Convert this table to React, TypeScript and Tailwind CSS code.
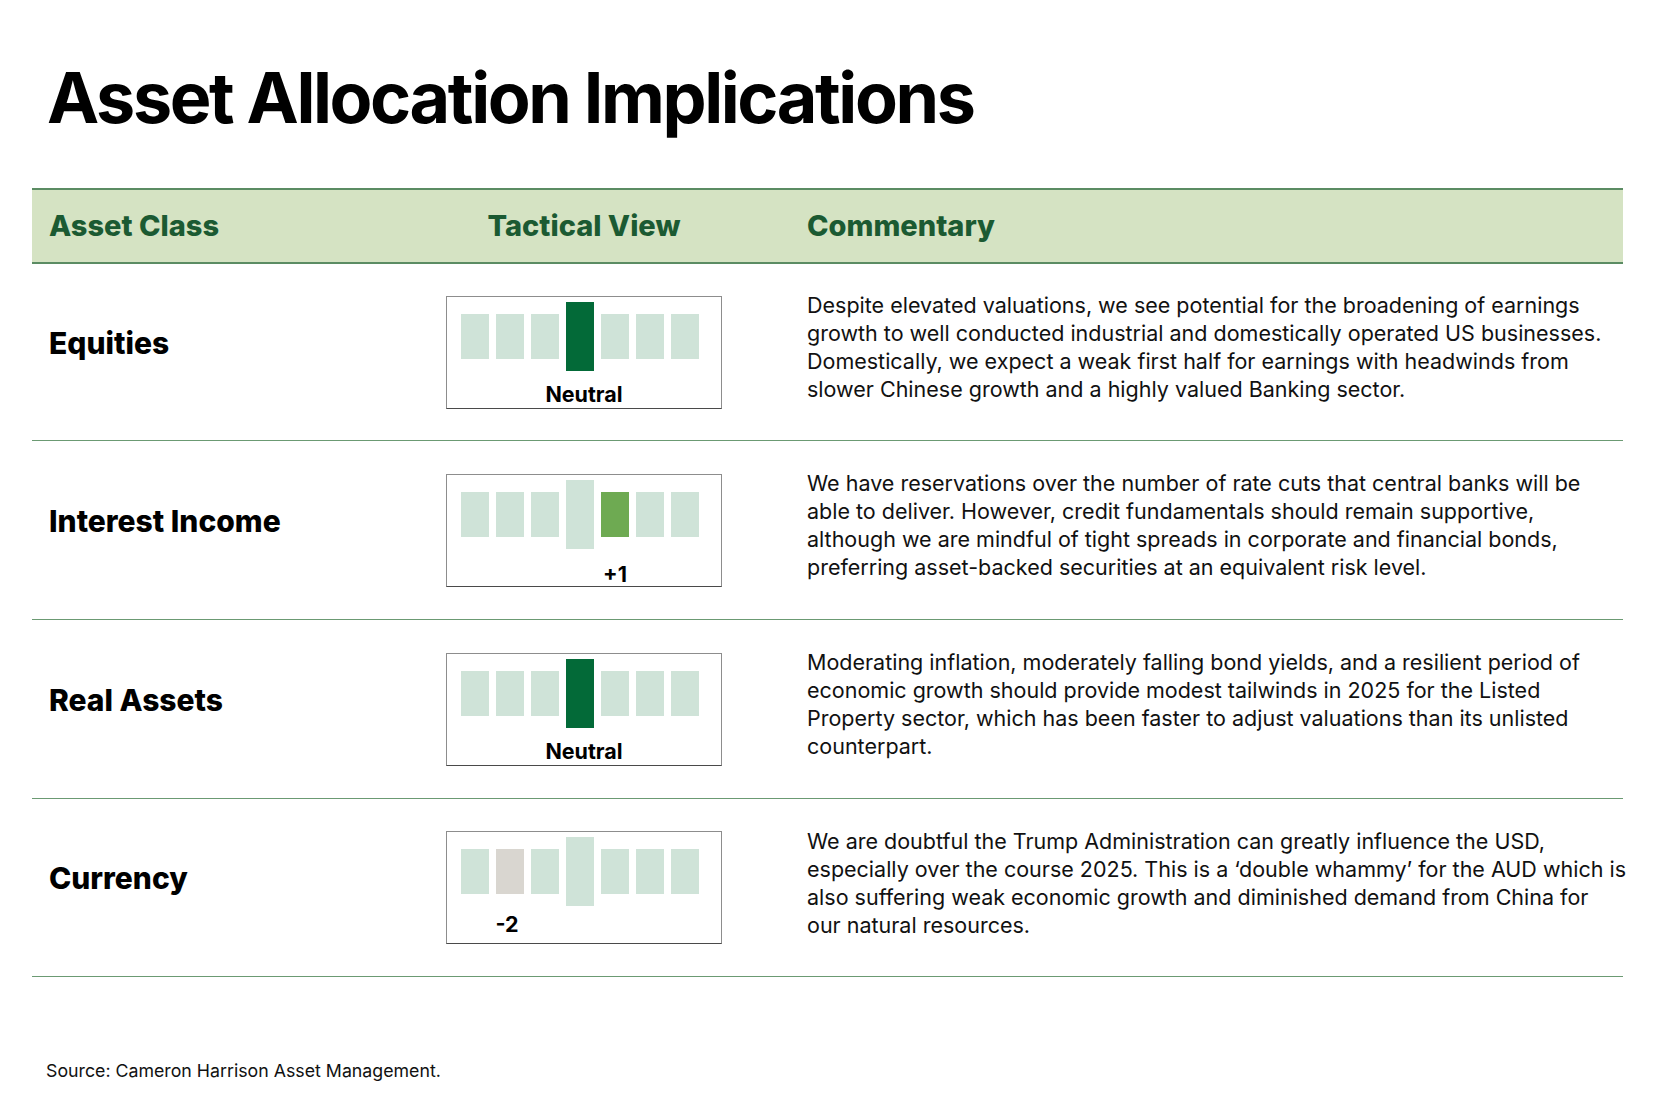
import React from 'react'

type Tone = 'neutral' | 'up' | 'down'

interface Row {
  asset: string
  pos: number // index of the highlighted bar, 3 is the middle
  tone: Tone
  label: string
  height: string
  labelGap: string
  lines: string[]
}

const rows: Row[] = [
  {
    asset: 'Equities',
    pos: 3,
    tone: 'neutral',
    label: 'Neutral',
    height: 'h-[177px]',
    labelGap: 'mt-[11px]',
    lines: [
      'Despite elevated valuations, we see potential for the broadening of earnings',
      'growth to well conducted industrial and domestically operated US businesses.',
      'Domestically, we expect a weak first half for earnings with headwinds from',
      'slower Chinese growth and a highly valued Banking sector.',
    ],
  },
  {
    asset: 'Interest Income',
    pos: 4,
    tone: 'up',
    label: '+1',
    height: 'h-[179px]',
    labelGap: 'mt-[13px]',
    lines: [
      'We have reservations over the number of rate cuts that central banks will be',
      'able to deliver. However, credit fundamentals should remain supportive,',
      'although we are mindful of tight spreads in corporate and financial bonds,',
      'preferring asset-backed securities at an equivalent risk level.',
    ],
  },
  {
    asset: 'Real Assets',
    pos: 3,
    tone: 'neutral',
    label: 'Neutral',
    height: 'h-[179px]',
    labelGap: 'mt-[11px]',
    lines: [
      'Moderating inflation, moderately falling bond yields, and a resilient period of',
      'economic growth should provide modest tailwinds in 2025 for the Listed',
      'Property sector, which has been faster to adjust valuations than its unlisted',
      'counterpart.',
    ],
  },
  {
    asset: 'Currency',
    pos: 1,
    tone: 'down',
    label: '-2',
    height: 'h-[178px]',
    labelGap: 'mt-[6px]',
    lines: [
      'We are doubtful the Trump Administration can greatly influence the USD,',
      'especially over the course 2025. This is a \u2018double whammy\u2019 for the AUD which is',
      'also suffering weak economic growth and diminished demand from China for',
      'our natural resources.',
    ],
  },
]

const activeColor: Record<Tone, string> = {
  neutral: 'bg-[#036a38]',
  up: 'bg-[#6eaa52]',
  down: 'bg-[#d9d6d0]',
}

const labelShift: Record<Tone, string> = {
  neutral: 'ml-[8px]',
  up: '',
  down: 'mr-[6px]',
}

function Gauge({ pos, tone, label, labelGap }: { pos: number; tone: Tone; label: string; labelGap: string }) {
  return (
    <div className="flex h-[113px] w-[276px] shrink-0 flex-col border border-[#8d8d8d] border-b-[#4a4a4a] bg-white pl-[14px] pr-[22px] pt-[5px]">
      <div className="flex gap-[7px]">
        {[0, 1, 2, 3, 4, 5, 6].map((i) => (
          <div key={i} className="flex w-[28px] flex-col items-center">
            <div className="flex h-[69px] w-full items-center">
              <div
                className={`w-full ${i === 3 ? 'h-[69px]' : 'h-[45px]'} ${
                  i === pos ? activeColor[tone] : 'bg-[#cfe3d8]'
                }`}
              />
            </div>
            <div
              className={`${labelGap} ${i === pos ? labelShift[tone] : ''} h-[25px] whitespace-nowrap text-[21.5px] font-bold leading-[25px] text-black`}
            >
              {i === pos ? label : ''}
            </div>
          </div>
        ))}
      </div>
    </div>
  )
}

export default function App() {
  return (
    <div className="min-h-screen bg-white pt-[63px] font-['Inter',sans-serif] text-black">
      <h1 className="pl-[47px] text-[70px] font-bold leading-[70px] tracking-[-0.034em]">
        Asset Allocation Implications
      </h1>

      <div className="ml-[32px] mt-[55px] w-[1591px]">
        {/* Header band */}
        <div className="flex h-[76px] items-center border-y-2 border-[#5b8c63] bg-[#d5e3c3] text-[29px] font-extrabold text-[#1b5a32]">
          <div className="w-[414px] shrink-0 pl-[17px]">Asset Class</div>
          <div className="w-[276px] shrink-0 text-center">Tactical View</div>
          <div className="ml-[85px]">Commentary</div>
        </div>

        {rows.map((r) => (
          <div key={r.asset} className={`flex ${r.height} items-center border-b border-[#6b9a73]`}>
            <div className="w-[414px] shrink-0 pb-[19px] pl-[17px] text-[30px] font-extrabold leading-[34px]">
              {r.asset}
            </div>
            <Gauge pos={r.pos} tone={r.tone} label={r.label} labelGap={r.labelGap} />
            <div className="ml-[85px] min-w-0 whitespace-nowrap pb-[10px] text-[21.5px] leading-[28px] text-[#111]">
              {r.lines.map((l) => (
                <div key={l}>{l}</div>
              ))}
            </div>
          </div>
        ))}
      </div>

      <p className="mt-[84px] pl-[46px] text-[17.75px] leading-[20px] text-[#111]">
        Source: Cameron Harrison Asset Management.
      </p>
    </div>
  )
}
